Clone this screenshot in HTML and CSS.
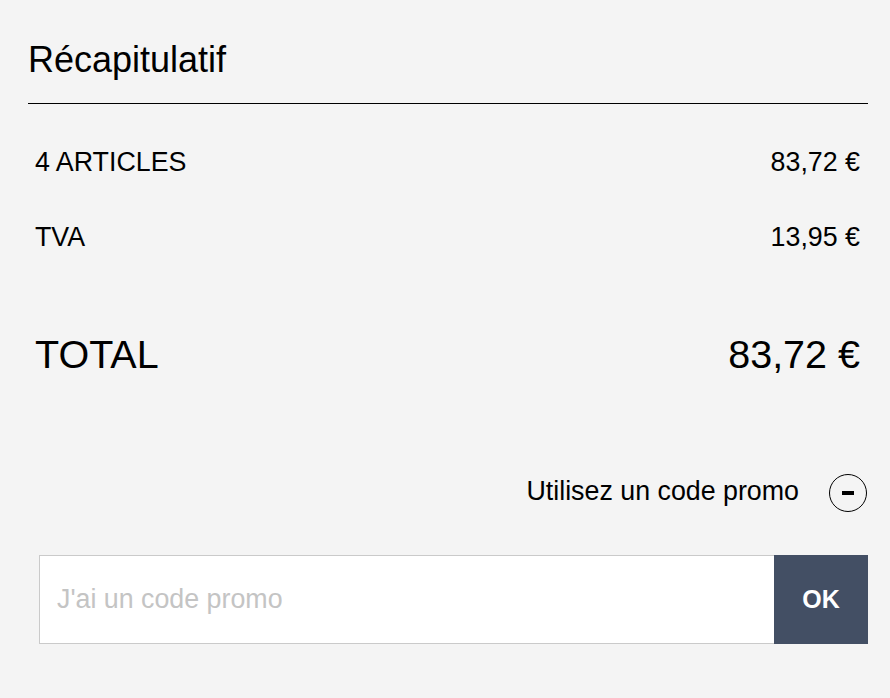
FILE: index.html
```html
<!DOCTYPE html>
<html lang="fr">
<head>
<meta charset="utf-8">
<title>Récapitulatif</title>
<link rel="stylesheet" href="styles.css">
</head>
<body>
<section class="summary">
  <h2 class="summary-title">Récapitulatif</h2>
  <div class="lines">
    <div class="line">
      <span>4 ARTICLES</span>
      <span>83,72 €</span>
    </div>
    <div class="line">
      <span>TVA</span>
      <span>13,95 €</span>
    </div>
  </div>
  <div class="total">
    <span>TOTAL</span>
    <span>83,72 €</span>
  </div>
  <div class="promo-toggle">
    <span class="promo-label">Utilisez un code promo</span>
    <button class="toggle-btn" type="button" aria-label="Masquer"><span class="minus"></span></button>
  </div>
  <form class="promo-form">
    <input class="promo-input" type="text" placeholder="J'ai un code promo">
    <button class="promo-ok" type="button">OK</button>
  </form>
</section>
</body>
</html>
```
FILE: styles.css
```css
html, body {
  margin: 0;
  padding: 0;
  background: #f4f4f4;
}
body {
  font-family: "Liberation Sans", Arial, Helvetica, sans-serif;
  color: #000;
}
.summary {
  width: 840px;
  margin-left: 28px;
  padding-top: 40px;
}
.summary-title {
  margin: 0;
  font-size: 36px;
  font-weight: 400;
  line-height: 40px;
  padding-bottom: 23px;
  border-bottom: 1px solid #000;
}
.lines {
  display: flex;
  flex-direction: column;
  gap: 45px;
  margin-top: 43px;
}
.line, .total {
  display: flex;
  justify-content: space-between;
  padding: 0 8px 0 7px;
}
.line {
  font-size: 26.8px;
  line-height: 30px;
}
.total {
  margin-top: 80px;
  font-size: 39.5px;
  line-height: 44px;
}
.promo-toggle {
  display: flex;
  justify-content: flex-end;
  align-items: flex-start;
  gap: 30px;
  margin-top: 98px;
  padding-right: 1px;
}
.promo-label {
  font-size: 26.8px;
  line-height: 30px;
  margin-top: 2px;
}
.toggle-btn {
  width: 38px;
  height: 38px;
  box-sizing: border-box;
  border: 1.5px solid #000;
  border-radius: 50%;
  background: transparent;
  padding: 0;
  display: flex;
  align-items: center;
  justify-content: center;
}
.minus {
  display: block;
  width: 12px;
  height: 4px;
  background: #000;
}
.promo-form {
  display: flex;
  margin: 43px 0 0 11px;
  height: 89px;
}
.promo-input {
  flex: 1;
  box-sizing: border-box;
  height: 89px;
  border: 1px solid #cacaca;
  border-right: none;
  background: #fff;
  padding: 0 0 0 17px;
  font-family: inherit;
  font-size: 26.8px;
  color: #333;
  outline: none;
}
.promo-input::placeholder {
  color: #c4c4c4;
}
.promo-ok {
  width: 94px;
  height: 89px;
  border: none;
  background: #434f64;
  color: #fff;
  font-family: inherit;
  font-size: 25px;
  font-weight: 700;
  padding: 0;
}
```
